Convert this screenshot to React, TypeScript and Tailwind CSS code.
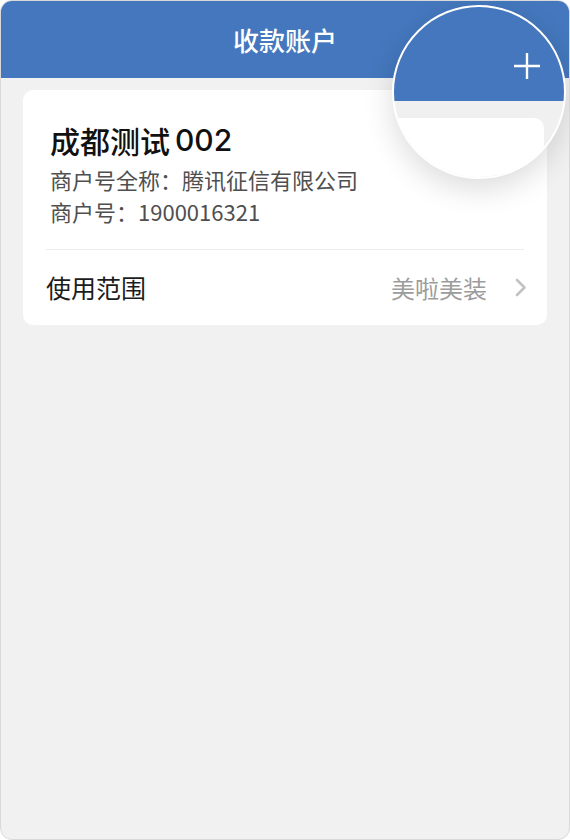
import React from "react";

const font = { fontFamily: '"Noto Sans CJK SC", "Noto Sans", sans-serif' };
const num = { fontFamily: 'Inter, "Noto Sans CJK SC", sans-serif' };

export default function App() {
  return (
    <div className="w-[570px] h-[840px] bg-white" style={font}>
      <div className="relative w-[570px] h-[840px] rounded-[12px] border border-[#d9d9d9] bg-[#f1f1f1] overflow-hidden">
        <div className="h-[77px] bg-[#4477bd] flex items-center justify-center">
          <span className="text-white text-[26px] font-medium leading-none">收款账户</span>
        </div>
        <div className="px-[22px] pt-[12px]">
          <div className="bg-white rounded-[10px] px-[23px]">
            <div className="pt-[31px] pl-[4px]">
              <div className="h-[38px] flex items-center text-[30px] leading-none font-medium text-[#111]">
                <span>成都测试</span>
                <span className="ml-[5px]" style={num}>002</span>
              </div>
              <div className="mt-[4px] h-[32px] flex items-center text-[22px] leading-none text-[#4f4f4f]">商户号全称：腾讯征信有限公司</div>
              <div className="h-[32px] flex items-center text-[22px] leading-none text-[#4f4f4f]">商户号：1900016321</div>
            </div>
            <div className="mt-[22px] h-px bg-[#ececec]" />
            <div className="h-[75px] flex items-center justify-between">
              <span className="text-[25px] text-[#1c1c1c]">使用范围</span>
              <div className="flex items-center gap-[28px]">
                <span className="text-[24px] text-[#9c9c9c]">美啦美装</span>
                <svg width="12" height="19" viewBox="0 0 12 19" className="mr-[-3px]">
                  <path d="M2 2 L9.5 9.5 L2 17" fill="none" stroke="#c2c2c2" strokeWidth="2.6" strokeLinecap="round" strokeLinejoin="round" />
                </svg>
              </div>
            </div>
          </div>
        </div>

        <div className="absolute left-[391px] top-[4px] w-[174px] h-[174px] rounded-full border-2 border-white overflow-hidden bg-[#f0f0f0] shadow-[0_10px_30px_rgba(0,0,0,0.14)]">
          <div className="absolute left-0 top-0 w-full h-[94px] bg-[#4477bd]" />
          <div className="absolute left-[-20px] top-[111px] w-[170px] h-[120px] bg-white rounded-[10px]" />
          <svg className="absolute left-[118px] top-[44px]" width="30" height="30" viewBox="0 0 30 30">
            <path d="M15 2 V28 M2 15 H28" stroke="white" strokeWidth="2.4" strokeLinecap="butt" />
          </svg>
        </div>
      </div>
    </div>
  );
}
